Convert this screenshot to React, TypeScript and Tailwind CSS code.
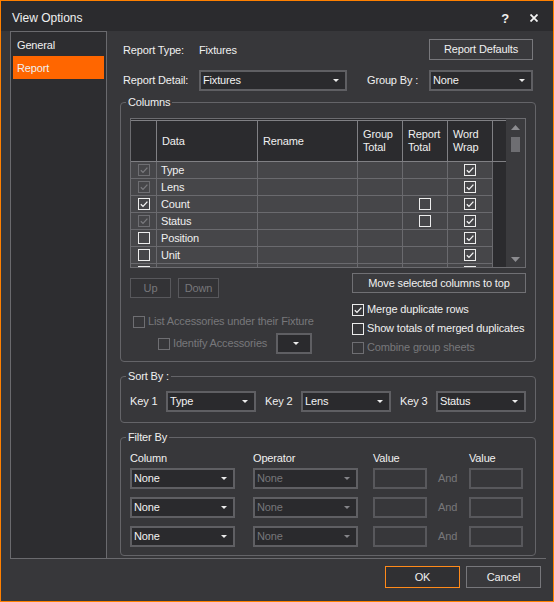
import React from 'react';

type Box = 'on' | 'off' | 'dis-on' | 'dis-off';

// small dropdown caret used by every combo box
function Caret({ disabled }: { disabled?: boolean }) {
  return (
    <svg width="6" height="3" viewBox="0 0 6 3" className={disabled ? 'text-[#85858a]' : 'text-[#ececec]'}>
      <polygon points="0,0 6,0 3,3" fill="currentColor" />
    </svg>
  );
}

function Check({ state }: { state: Box }) {
  const dis = state === 'dis-on' || state === 'dis-off';
  const checked = state === 'on' || state === 'dis-on';
  return (
    <span
      className={`w-[12px] h-[12px] shrink-0 border flex items-center justify-center ${
        dis ? 'border-[#6e6e72] text-[#7a7a7e]' : 'border-[#ececec] text-[#f4f4f4]'
      }`}
    >
      {checked && (
        <svg width="10" height="10" viewBox="0 0 10 10" fill="none" stroke="currentColor" strokeWidth="1.3">
          <path d="M1.8 5.2 L4 7.4 L8.4 2.6" />
        </svg>
      )}
    </span>
  );
}

function CheckRow({ state, label, className = '' }: { state: Box; label: string; className?: string }) {
  const dis = state === 'dis-on' || state === 'dis-off';
  return (
    <div className={`flex items-center gap-[3px] h-[13px] whitespace-nowrap ${className}`}>
      <Check state={state} />
      <span className={dis ? 'text-[#77777b]' : 'text-[#f0f0f0]'}>{label}</span>
    </div>
  );
}

function Select({ value, width, disabled }: { value: string; width: string; disabled?: boolean }) {
  return (
    <div
      className={`${width} h-[21px] shrink-0 flex items-center justify-between border-2 border-[#5f5f63] bg-[#2a2a2d] pl-[2px] pr-[6px]`}
    >
      <span className={disabled ? 'text-[#77777b]' : 'text-[#f2f2f2]'}>{value}</span>
      <Caret disabled={disabled} />
    </div>
  );
}

function Group({ title, className = '', children }: { title: string; className?: string; children: React.ReactNode }) {
  return (
    <fieldset className={`border border-[#646468] rounded-[4px] px-[9px] min-w-0 ${className}`}>
      <legend className="-ml-[4px] px-[2px] leading-[13px] text-[#f0f0f0]">{title}</legend>
      {children}
    </fieldset>
  );
}

const rows: { name: string; sel: Box; report?: Box; wrap: Box }[] = [
  { name: 'Type', sel: 'dis-on', wrap: 'on' },
  { name: 'Lens', sel: 'dis-on', wrap: 'on' },
  { name: 'Count', sel: 'on', report: 'off', wrap: 'on' },
  { name: 'Status', sel: 'dis-on', report: 'off', wrap: 'on' },
  { name: 'Position', sel: 'off', wrap: 'on' },
  { name: 'Unit', sel: 'off', wrap: 'on' },
  { name: '', sel: 'off', wrap: 'on' },
];

function ColumnsTable() {
  return (
    <div className="w-[396px] h-[150px] border border-[#6c6c70] flex overflow-hidden">
      <div className="w-[375px] bg-[#2b2b2e] pt-[1px] overflow-hidden">
        {/* header */}
        <div className="flex h-[42px] border-y border-[#808084] text-[#f0f0f0]">
          <div className="w-[26px] border-r border-[#808084]" />
          <div className="w-[101px] border-r border-[#808084] flex items-center pl-[5px]">Data</div>
          <div className="w-[100px] border-r border-[#808084] flex items-center pl-[5px]">Rename</div>
          <div className="w-[45px] border-r border-[#808084] flex items-center pl-[5px]">Group<br />Total</div>
          <div className="w-[45px] border-r border-[#808084] flex items-center pl-[5px]">Report<br />Total</div>
          <div className="w-[45px] border-r border-[#808084] flex items-center pl-[5px]">Word<br />Wrap</div>
          <div className="flex-1" />
        </div>
        {rows.map((r, i) => (
          <div key={i} className="flex w-[362px] h-[17px] bg-[#464649] text-[#f0f0f0]">
            <div className="w-[26px] border-r border-b border-[#6a6a6e] flex items-center justify-center">
              <Check state={r.sel} />
            </div>
            <div className="w-[101px] border-r border-b border-[#6a6a6e] flex items-center pl-[4px]">{r.name}</div>
            <div className="w-[100px] border-r border-b border-[#6a6a6e]" />
            <div className="w-[45px] border-r border-b border-[#6a6a6e]" />
            <div className="w-[45px] border-r border-b border-[#6a6a6e] flex items-center justify-center">
              {r.report && <Check state={r.report} />}
            </div>
            <div className="w-[45px] border-r border-b border-[#6a6a6e] flex items-center justify-center">
              <Check state={r.wrap} />
            </div>
          </div>
        ))}
      </div>
      {/* scrollbar */}
      <div className="w-[19px] bg-[#3b3b3e] flex flex-col items-center pt-[6px] pb-[5px]">
        <svg width="9" height="5" viewBox="0 0 9 5">
          <polygon points="0,5 9,5 4.5,0" fill="#8c8c90" />
        </svg>
        <div className="w-[9px] h-[15px] mt-[7px] bg-[#6e6e72]" />
        <div className="flex-1" />
        <svg width="9" height="5" viewBox="0 0 9 5">
          <polygon points="0,0 9,0 4.5,5" fill="#8c8c90" />
        </svg>
      </div>
    </div>
  );
}

function FilterRow() {
  return (
    <div className="flex items-center h-[21px]">
      <Select value="None" width="w-[105px]" />
      <div className="ml-[18px]">
        <Select value="None" width="w-[105px]" disabled />
      </div>
      <div className="ml-[15px] w-[54px] h-[21px] border-2 border-[#58585c]" />
      <div className="w-[42px] pl-[11px] text-[#77777b]">And</div>
      <div className="w-[54px] h-[21px] border-2 border-[#58585c]" />
    </div>
  );
}

export default function App() {
  return (
    <div className="w-[554px] h-[602px] bg-[#37373a] border border-[#ff8000] flex flex-col text-[11px] leading-[13px] tracking-[-0.15px] text-[#f0f0f0] [font-family:'Liberation_Sans',Arial,sans-serif]">
      {/* title bar */}
      <div className="h-[30px] shrink-0 bg-[#2b2b2e] flex items-center pt-[4px] pl-[11px] pr-[15px]">
        <span className="text-[12px] tracking-normal">View Options</span>
        <div className="ml-auto flex items-center gap-[21px]">
          <span className="text-[13px] font-bold">?</span>
          <svg width="8" height="8" viewBox="0 0 8 8" stroke="#f4f4f4" strokeWidth="1.8">
            <path d="M0.5 0.5 L7.5 7.5 M7.5 0.5 L0.5 7.5" />
          </svg>
        </div>
      </div>

      {/* body */}
      <div className="h-[528px] shrink-0 ml-[9px] mr-[7px] flex border-b border-[#6a6a6e]">
        <div className="w-[97px] border-l border-t border-r border-[#6a6a6e] bg-[#2d2d30] pt-[1px] px-[2px]">
          <div className="h-[23px] flex items-center pl-[4px] pt-[1px]">General</div>
          <div className="h-[23px] flex items-center pl-[4px] pt-[1px] bg-[#ff6600]">Report</div>
        </div>

        <div className="flex-1 pl-[13px] pr-[10px] flex flex-col">
          <div className="mt-[8px] h-[21px] flex items-center pl-[3px] pr-[3px]">
            <span className="w-[76px] pt-[1px]">Report Type:</span>
            <span className="flex-1 pt-[1px]">Fixtures</span>
            <div className="w-[104px] h-[21px] border border-[#78787c] bg-[#39393c] flex items-center justify-center">
              Report Defaults
            </div>
          </div>

          <div className="mt-[10px] h-[21px] flex items-center pl-[3px]">
            <span className="w-[76px]">Report Detail:</span>
            <Select value="Fixtures" width="w-[148px]" />
            <span className="ml-[20px] w-[62px]">Group By :</span>
            <Select value="None" width="w-[104px]" />
          </div>

          <Group title="Columns" className="mt-[5px] pt-[9px] pb-[7px]">
            <ColumnsTable />
            <div className="flex justify-between">
              <div className="w-[182px] flex flex-col">
                <div className="mt-[10px] flex gap-[7px]">
                  <div className="w-[41px] h-[20px] border border-[#58585c] bg-[#333336] text-[#77777b] flex items-center justify-center">Up</div>
                  <div className="w-[41px] h-[20px] border border-[#58585c] bg-[#333336] text-[#77777b] flex items-center justify-center">Down</div>
                </div>
                <CheckRow state="dis-off" label="List Accessories under their Fixture" className="mt-[17px] pl-[3px]" />
                <div className="mt-[5px] h-[21px] flex items-center">
                  <CheckRow state="dis-off" label="Identify Accessories" className="pl-[28px]" />
                  <div className="ml-auto w-[36px] h-[21px] border-2 border-[#5f5f63] bg-[#2a2a2d] flex items-center justify-end pr-[11px]">
                    <Caret />
                  </div>
                </div>
              </div>
              <div className="w-[174px] flex flex-col">
                <div className="mt-[5px] h-[20px] border border-[#707074] bg-[#3b3b3e] flex items-center justify-center">
                  Move selected columns to top
                </div>
                <CheckRow state="on" label="Merge duplicate rows" className="mt-[10px]" />
                <CheckRow state="off" label="Show totals of merged duplicates" className="mt-[6px]" />
                <CheckRow state="dis-off" label="Combine group sheets" className="mt-[6px]" />
              </div>
            </div>
          </Group>

          <Group title="Sort By :" className="mt-[8px] pt-[8px] pb-[10px]">
            <div className="flex items-center">
              <span className="w-[36px]">Key 1</span>
              <Select value="Type" width="w-[90px]" />
              <span className="ml-[9px] w-[36px]">Key 2</span>
              <Select value="Lens" width="w-[90px]" />
              <span className="ml-[9px] w-[36px]">Key 3</span>
              <Select value="Status" width="w-[90px]" />
            </div>
          </Group>

          <Group title="Filter By" className="mt-[8px] pt-[8px] pb-[8px]">
            <div className="flex h-[13px]">
              <span className="w-[123px]">Column</span>
              <span className="w-[120px]">Operator</span>
              <span className="w-[96px]">Value</span>
              <span>Value</span>
            </div>
            <div className="mt-[3px] flex flex-col gap-[8px]">
              <FilterRow />
              <FilterRow />
              <FilterRow />
            </div>
          </Group>
        </div>
      </div>

      {/* footer */}
      <div className="flex justify-end pt-[7px] pr-[12px]">
        <div className="w-[75px] h-[22px] border border-[#ff8a1a] bg-[#303033] flex items-center justify-center">OK</div>
        <div className="ml-[6px] w-[75px] h-[22px] border border-[#77777b] bg-[#39393c] flex items-center justify-center">Cancel</div>
      </div>
    </div>
  );
}
